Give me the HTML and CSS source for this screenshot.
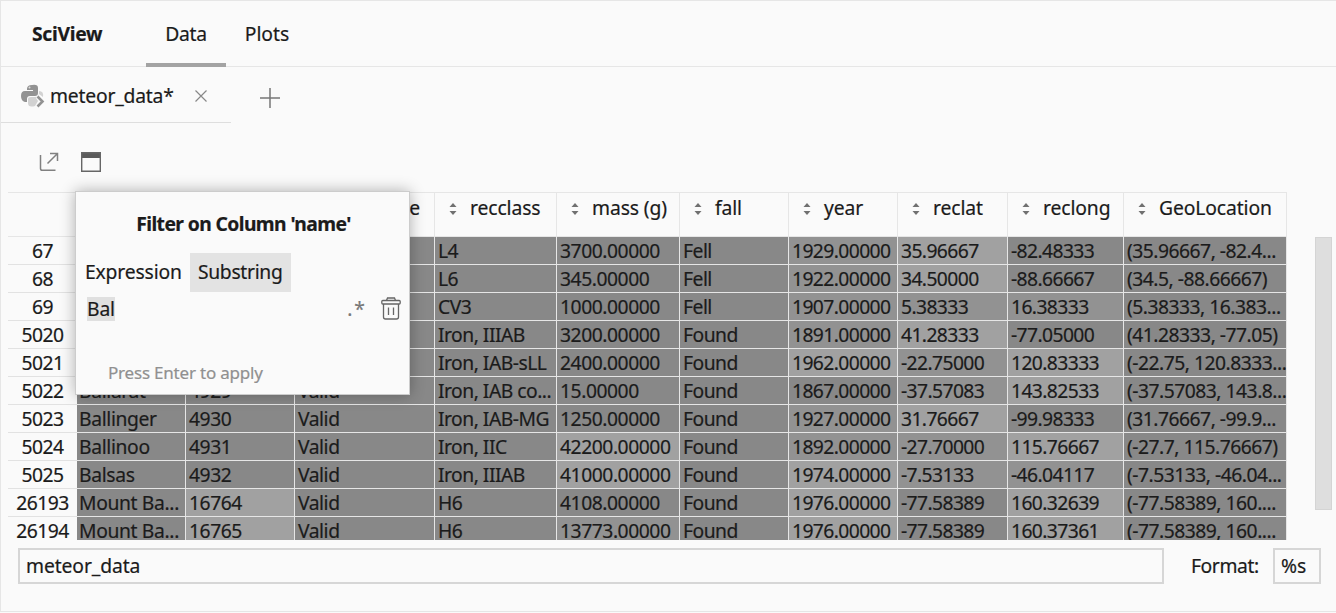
FILE: index.html
```html
<!DOCTYPE html>
<html lang="en">
<head>
<meta charset="utf-8">
<title>SciView</title>
<link rel="stylesheet" href="styles.css">
</head>
<body>
<div class="panel">
  <header class="top">
    <h1 class="title">SciView</h1>
    <nav class="tabs"><span class="tab active">Data</span><span class="tab plots">Plots</span></nav>
  </header>
  <div class="filebar">
    <div class="file">
      <svg class="py" width="24" height="24" viewBox="0 0 24 24">
        <path fill="#929292" d="M6 5Q6 1 11 1Q17 0 17 4V9Q17 12 14 12H9Q6 12 6 15V18H4Q0 17 0 12Q0 7 4 7H12V6H6Z"/>
        <path fill="#d2d2d2" d="M18 7Q23 7 22 13L18 10L15 14L17 17L14 22Q7 24 7 19V15Q7 13 10 13H14Q18 13 18 9Z"/>
        <circle cx="8.500" cy="3.600" r="1" fill="#ddd"/>
        <path fill="none" stroke="#929292" stroke-width="2.600" d="M16.500 12.500L21.500 17.500L16.500 22.500"/>
      </svg>
      <span class="filename">meteor_data*</span>
      <svg class="close" width="12" height="12" viewBox="0 0 12 12"><path d="M.5 .5L11.500 11.500M11.500 .5L.5 11.500" stroke="#888" stroke-width="1.200"/></svg>
    </div>
    <svg class="plus" width="22" height="22" viewBox="0 0 22 22"><path d="M11 1V21M1 11H21" stroke="#777" stroke-width="1.500"/></svg>
  </div>
  <div class="tools">
    <svg width="20" height="20" viewBox="0 0 20 20"><path d="M1.500 3V16.500Q1.500 18.300 3.300 18.300H16.500M8.500 11.500L18 2M11 1.500H18.500V9" fill="none" stroke="#808080" stroke-width="1.500"/></svg>
    <svg width="20" height="20" viewBox="0 0 20 20"><path d="M0 0H20V6H0Z" fill="#5a5a5a"/><path d="M.7 .7H19.300V19.300H.7Z" fill="none" stroke="#666" stroke-width="1.400"/></svg>
  </div>
  <div class="data">
    <div class="grid" id="grid"></div>
    <div class="scroll"></div>
  </div>
  <footer class="foot">
    <div class="field name">meteor_data</div>
    <span class="format">Format:</span>
    <div class="field fmt">%s</div>
  </footer>
</div>
<section class="popup">
  <h2 class="ptitle">Filter on Column 'name'</h2>
  <div class="modes"><span class="mode">Expression</span><span class="mode on">Substring</span></div>
  <div class="query">
    <span class="value">Bal</span>
    <span class="regex">.*</span>
    <svg class="trash" width="20" height="23" viewBox="0 0 20 23" fill="none" stroke="#666" stroke-width="1.300"><rect x=".8" y="3.500" width="18.400" height="3.500" rx="1"/><path d="M5.500 3.500L6.500 1H13.500L14.500 3.500M2.500 7V20Q2.500 22 4.500 22H15.500Q17.500 22 17.500 20V7M7.500 10.500V18M12.500 10.500V18"/></svg>
  </div>
  <p class="hint">Press Enter to apply</p>
</section>
<script src="table.js"></script>
</body>
</html>
```
FILE: styles.css
```css
* { box-sizing: border-box; }
body { margin: 0; width: 1336px; height: 613px; overflow: hidden; background: #fafafa; color: #1b1b1b; font-family: "Noto Sans", sans-serif; font-size: 19.3px; letter-spacing: -0.5px; line-height: 28px; -webkit-text-stroke: 0.2px; }
.panel { display: flex; flex-direction: column; height: 612px; border: 1px solid #e6e6e6; border-right: 0; }
.top { display: flex; height: 66px; border-bottom: 1px solid #e6e6e6; }
.title { margin: 19px 0 0 31px; width: 114px; font-size: 19.3px; line-height: 28px; letter-spacing: -0.3px; }
.tabs { display: flex; }
.tab { width: 80px; height: 66px; padding-top: 19px; text-align: center; border-bottom: 4px solid transparent; letter-spacing: -0.3px; }
.tab.active { border-color: #a3a3a3; }
.tab.plots { width: 82px; letter-spacing: 0; }
.filebar { display: flex; height: 56px; }
.file { display: flex; width: 230px; padding-left: 20px; border-bottom: 1px solid #dedede; }
.py { margin-top: 17px; }
.filename { margin: 15px 0 0 5px; width: 124px; letter-spacing: -0.2px; }
.close { margin: 23px 0 0 21px; }
.plus { margin: 20px 0 0 28px; }
.tools { display: flex; gap: 22px; height: 69px; padding: 29px 0 0 38px; }
.data { display: flex; height: 348px; }
.grid { display: grid; grid-template-columns: 69px 109px 109px 140px 122px 123px 109px 109px 110px 116px 163px; grid-template-rows: 44px; grid-auto-rows: 28px; width: 1279px; margin-left: 7px; height: 348px; overflow: hidden; border-top: 1px solid #e6e6e6; }
.h { display: flex; align-items: flex-start; gap: 12px; padding: 1px 0 0 13px; border-right: 1px solid #e6e6e6; border-bottom: 1px solid #e6e6e6; letter-spacing: -0.1px; white-space: nowrap; }
.h.end { justify-content: flex-end; padding: 1px 14px 0 0; }
.h svg { margin-top: 8px; flex: none; }
.n { text-align: center; border-bottom: 1px solid #e2e2e2; }
.c { padding-left: 3px; line-height: 28px; border-right: 1px solid #e6e6e6; border-bottom: 1px solid #e6e6e6; background: #888; white-space: nowrap; overflow: hidden; }
.c1 { padding-left: 2px; letter-spacing: -0.35px; }
.c2, .c3, .c5 { letter-spacing: -0.45px; }
.c7, .c8, .c9 { letter-spacing: -0.6px; }
.m { background: #929292; }
.l { background: #a1a1a1; }
.scroll { width: 17px; height: 273px; margin: 45px 0 0 28px; background: #dedede; border: 1px solid #d4d4d4; }
.foot { display: flex; height: 70px; padding: 8px 0 0 17px; }
.field { height: 36px; border: 2px solid #d6d6d6; padding: 2px 0 0 6px; letter-spacing: -0.1px; }
.field.name { width: 1146px; }
.format { margin: 4px 0 0 27px; width: 82px; letter-spacing: -0.4px; }
.fmt { width: 48px; }
.popup { position: absolute; left: 75px; top: 191px; width: 335px; height: 204px; background: #fafafa; border: 1px solid #ccc; box-shadow: 0 0 14px rgba(0,0,0,.3); padding: 18px 7px 0 9px; letter-spacing: -0.15px; }
.ptitle { margin: 0; text-align: center; font-size: 19.3px; line-height: 28px; letter-spacing: -0.6px; }
.modes { display: flex; gap: 8px; margin-top: 15px; line-height: 38px; height: 39px; }
.on { width: 101px; text-align: center; background: #e3e3e3; letter-spacing: -0.3px; }
.query { display: flex; margin: 4px 0 0 2px; height: 29px; }
.value { height: 24px; margin-top: 1px; line-height: 23px; background: #e0e0e0; }
.regex { margin: -1px 0 0 auto; color: #777; letter-spacing: 2px; }
.trash { margin: 1px 1px 0 14px; }
.hint { margin: 36px 0 0 23px; font-size: 17px; line-height: 24px; color: #909090; letter-spacing: -0.2px; }
```
FILE: table.js
```js
const columns = ["", "", "type", "recclass", "mass (g)", "fall", "year", "reclat", "reclong", "GeoLocation"];
const rows = `67||||L4|3700.00000|Fell|1929.00000|35.96667|-82.48333|(35.96667, -82.4...
68||||L6|345.00000|Fell|1922.00000|34.50000|-88.66667|(34.5, -88.66667)
69||||CV3|1000.00000|Fell|1907.00000|5.38333|16.38333|(5.38333, 16.383...
5020||||Iron, IIIAB|3200.00000|Found|1891.00000|41.28333|-77.05000|(41.28333, -77.05)
5021||||Iron, IAB-sLL|2400.00000|Found|1962.00000|-22.75000|120.83333|(-22.75, 120.8333...
5022|Ballarat|4929|Valid|Iron, IAB co...|15.00000|Found|1867.00000|-37.57083|143.82533|(-37.57083, 143.8...
5023|Ballinger|4930|Valid|Iron, IAB-MG|1250.00000|Found|1927.00000|31.76667|-99.98333|(31.76667, -99.9...
5024|Ballinoo|4931|Valid|Iron, IIC|42200.00000|Found|1892.00000|-27.70000|115.76667|(-27.7, 115.76667)
5025|Balsas|4932|Valid|Iron, IIIAB|41000.00000|Found|1974.00000|-7.53133|-46.04117|(-7.53133, -46.04...
26193|Mount Ba...|16764|Valid|H6|4108.00000|Found|1976.00000|-77.58389|160.32639|(-77.58389, 160....
26194|Mount Ba...|16765|Valid|H6|13773.00000|Found|1976.00000|-77.58389|160.37361|(-77.58389, 160....`.split("\n");
// Heat shading per numeric column: d = dark, m = medium, l = light.
const heat = { 2: "dddddddddll", 5: "dddddddlldm", 7: "mmmmldmmlll", 8: "llmlmmlmmdd", 9: "ddmdlldlmll" };
const sort = '<svg width="10" height="14" viewBox="0 0 10 14"><path d="M5 1L8.500 5H1.500ZM5 13L1.500 9H8.500Z" fill="#707070"/></svg>';
let html = '<div class="h"></div>';
columns.forEach((n, i) => { html += i < 3 ? `<div class="h end">${n}</div>` : `<div class="h">${sort}<span>${n}</span></div>`; });
rows.forEach((line, r) => line.split("|").forEach((t, c) => {
  html += c ? `<div class="c c${c} ${heat[c] ? heat[c][r] : "d"}">${t}</div>` : `<div class="n">${t}</div>`;
}));
document.getElementById("grid").innerHTML = html;
```
